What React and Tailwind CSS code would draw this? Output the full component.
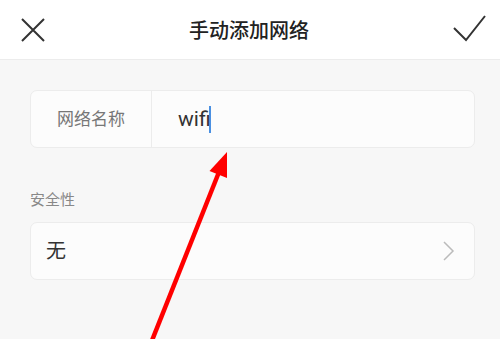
import React from 'react';

const App = () => {
  return (
    <div
      className="relative w-[500px] h-[339px] overflow-hidden bg-[#f7f7f7] font-['Noto_Sans','Noto_Sans_CJK_SC',sans-serif]"
    >
      {/* Header */}
      <div className="flex items-center justify-between h-[60px] bg-white border-b border-[#ececec] px-[20px]">
        <svg width="26" height="26" viewBox="0 0 26 26" className="text-[#333]">
          <path d="M2 2 L24 24 M24 2 L2 24" stroke="currentColor" strokeWidth="2" fill="none" />
        </svg>
        <div className="text-[20px] font-medium text-[#222] leading-none mt-[2px]">手动添加网络</div>
        <svg width="36" height="30" viewBox="0 0 36 30" className="text-[#333] mr-[-8px] mt-[-3px]">
          <path d="M2 15 L14 27 L33 3" stroke="currentColor" strokeWidth="2" fill="none" />
        </svg>
      </div>

      {/* Body */}
      <div className="px-[30px] pt-[30px]">
        <div className="flex h-[58px] w-[445px] rounded-[7px] border border-[#ececec] bg-[#fcfcfc]">
          <div className="flex w-[121px] items-center justify-center border-r border-[#ececec] text-[17px] text-[#777]">
            网络名称
          </div>
          <div className="flex items-center pl-[26px]">
            <span className="text-[21px] text-[#333] leading-none font-['Roboto','Noto_Sans',sans-serif]">wifi</span>
            <span className="ml-[-2px] h-[27px] w-[2px] bg-[#4a90e2]" />
          </div>
        </div>

        <div className="mt-[44px] text-[15px] text-[#888] leading-none">安全性</div>

        <div className="mt-[15px] flex h-[58px] w-[445px] items-center justify-between rounded-[7px] border border-[#ececec] bg-[#fcfcfc] pl-[15px] pr-[19px]">
          <span className="text-[20px] text-[#333]">无</span>
          <svg width="12" height="20" viewBox="0 0 12 20" className="text-[#bbb]">
            <path d="M1 1 L10 10 L1 19" stroke="currentColor" strokeWidth="1.5" fill="none" />
          </svg>
        </div>
      </div>

      {/* Annotation arrow */}
      <svg className="absolute left-0 top-0 pointer-events-none" width="500" height="339" viewBox="0 0 500 339">
        <line x1="149" y1="348" x2="219" y2="172" stroke="#ff0000" strokeWidth="4.5" />
        <polygon points="227,152 227,178 209.5,171" fill="#ff0000" />
      </svg>
    </div>
  );
};

export default App;
